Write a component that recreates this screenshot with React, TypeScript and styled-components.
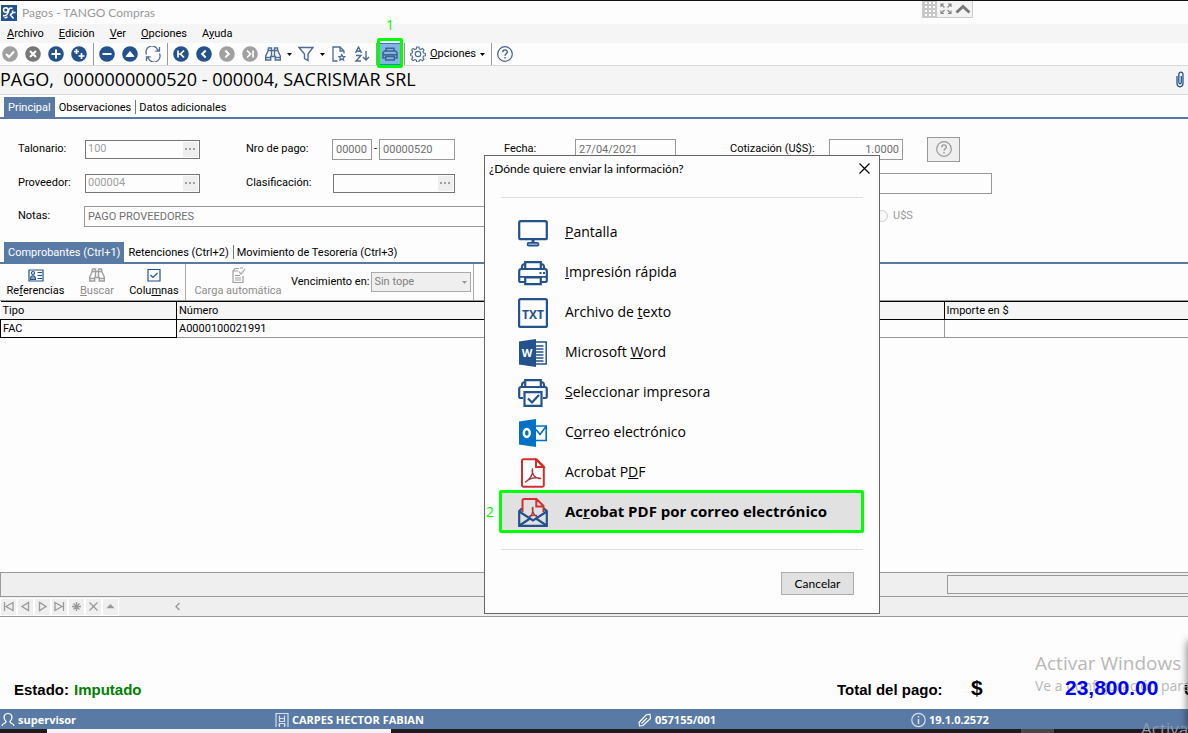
import React from "react";
import styled, { createGlobalStyle, css } from "styled-components";

const NAVY = "#24528c";
const STEEL = "#5a7aa6";
const MARK = "#00ff00";
const UI = `Roboto, "Liberation Sans", sans-serif`;
const HUMANIST = `"Open Sans", "Noto Sans", sans-serif`;
const COMPACT = `Lato, "Open Sans", sans-serif`;
const CLASSIC = `"Liberation Sans", Arial, sans-serif`;

const Global = createGlobalStyle`
  * { box-sizing: border-box; }
  body { margin: 0; background: #fdfdfd; color: #000; font: 11px/16px ${UI}; }
  button, input, select { font: inherit; color: inherit; margin: 0; border-radius: 0; }
  button { background: none; border: 0; padding: 0; }
`;

const Page = styled.div`
  position: relative;
  display: flex;
  flex-direction: column;
  min-height: 100vh;
  overflow: hidden;
  background: #fdfdfd;
  border-top: 1px solid #111;
`;
const TitleBar = styled.header`
  display: flex;
  align-items: center;
  gap: 5px;
  height: 23px;
  padding-left: 1px;
  color: #999;
  font: 12px/16px ${COMPACT};
`;
const MenuBar = styled.nav`
  display: flex;
  align-items: center;
  gap: 15px;
  height: 19px;
  padding-left: 7px;
  background: #f5f5f5;
`;
const Toolbar = styled.div`
  display: flex;
  align-items: center;
  gap: 7px;
  height: 23px;
  padding-left: 2px;
  border-bottom: 1px solid #d9d9d9;
`;
const Divider = styled.span`
  width: 1px;
  align-self: stretch;
  margin: 0 -2px 0 -1px;
  background: #999;
`;
const ToolButton = styled.button<{ $active?: boolean }>`
  position: relative;
  display: flex;
  align-items: center;
  gap: 4px;
  height: 22px;
  ${(p) =>
    p.$active &&
    css`
      margin: 0 -3px;
      padding: 0 3px;
      background: #84b4e4;
      box-shadow: inset 0 1px #2a7fd4, inset 0 -1px #2a7fd4;
    `}
`;
const CaretButton = styled(ToolButton)`
  margin: 0 -1px;
`;
const Callout = styled.span`
  position: absolute;
  inset: -5px -2px -3px -2px;
  border: 3px solid ${MARK};
  border-radius: 2px;
`;
const CalloutNumber = styled.span`
  position: absolute;
  left: 0;
  right: 0;
  bottom: 33px;
  text-align: center;
  color: ${MARK};
  font: 14px/14px ${HUMANIST};
`;
const Heading = styled.h1`
  display: flex;
  align-items: center;
  justify-content: space-between;
  height: 29px;
  margin: 0;
  padding: 0 3px 2px 0;
  background: #f5f5f5;
  border-bottom: 1px solid #d9d9d9;
  font: 18px/24px ${HUMANIST};
  white-space: pre;
`;
const Tabs = styled.div<{ $top: number }>`
  display: flex;
  align-items: flex-end;
  height: ${(p) => p.$top + 22}px;
  padding: 0 4px;
  border-bottom: 2px solid ${STEEL};
`;
const Tab = styled.button<{ $on?: boolean }>`
  height: 20px;
  padding: 1px 4px 0;
  position: relative;
  ${(p) => (p.$on ? `background:${STEEL};color:#fff;` : "")}
  & + &:not(:nth-child(2))::before {
    content: "";
    position: absolute;
    left: 0;
    top: 3px;
    bottom: 3px;
    width: 1px;
    background: #777;
  }
`;
const Form = styled.form`
  display: grid;
  grid-template-columns: 66px 162px 86px 172px 71px 155px 99px 98px 1fr;
  grid-template-rows: 34px 34px 32px;
  align-items: center;
  height: 123px;
  padding: 13px 0 10px 18px;
`;
const Cell = styled.div<{ $from?: number; $to?: number; $indent?: number }>`
  display: flex;
  align-items: center;
  gap: 2px;
  padding-left: ${(p) => p.$indent ?? 0}px;
  ${(p) => (p.$from ? `grid-column: ${p.$from} / ${p.$to};` : "")}
`;
const TextBox = styled.input<{ $w: number; $right?: boolean }>`
  width: ${(p) => p.$w}px;
  height: 21px;
  padding: 0 3px;
  background: #fdfdfd;
  border: 1px solid #999;
  color: #707070;
  text-align: ${(p) => (p.$right ? "right" : "left")};
`;
const Lookup = styled.div<{ $w: number }>`
  display: flex;
  align-items: center;
  width: ${(p) => p.$w}px;
  height: 19px;
  border: 1px solid #777;
  padding-right: 1px;
  input {
    flex: 1;
    min-width: 0;
    height: 16px;
    padding: 0 2px;
    border: 0;
    background: none;
    color: #a0a0a0;
  }
  button {
    display: flex;
    align-items: center;
    justify-content: center;
    width: 15px;
    height: 15px;
    background: #eee;
  }
`;
const HelpButton = styled.button`
  display: flex;
  align-items: center;
  justify-content: center;
  width: 33px;
  height: 25px;
  background: #efefef;
  border: 1px solid #999;
`;
const RadioLabel = styled.label`
  display: flex;
  align-items: center;
  gap: 5px;
  color: #999;
  input { width: 12px; height: 12px; margin: 0; }
`;
const GridBar = styled.div`
  display: flex;
  height: 37px;
  border-bottom: 1px solid #999;
`;
const GridTool = styled.button<{ $w: number; $off?: boolean }>`
  display: flex;
  flex-direction: column;
  align-items: center;
  width: ${(p) => p.$w}px;
  padding-top: 3px;
  white-space: nowrap;
  color: ${(p) => (p.$off ? "#8c8c8c" : "#000")};
`;
const BarRule = styled.span`
  width: 1px;
  background: #aaa;
`;
const DueLabel = styled.label`
  display: flex;
  align-items: center;
  gap: 2px;
  padding: 0 2px 0 1px;
`;
const Select = styled.select`
  appearance: none;
  width: 100px;
  height: 20px;
  padding: 0 2px;
  border: 1px solid #aaa;
  background: #efefef;
  color: #808080;
  opacity: 1;
`;
const SelectWrap = styled.span`
  position: relative;
  display: flex;
  svg { position: absolute; right: 4px; top: 9px; }
`;
const GridArea = styled.div`
  flex: 1;
`;
const Table = styled.table`
  width: 100%;
  table-layout: fixed;
  border-collapse: collapse;
  th, td { height: 18px; padding: 0 2px; text-align: left; font-weight: 400; line-height: 16px; }
  th { background: #f5f5f5; border: 1px solid #000; border-left-width: 0; border-right-width: 0; }
  th + th { border-left-width: 1px; }
  td { border-bottom: 1px solid #999; }
  td:first-child { border: 1px solid #000; }
  td + td { border-left: 1px solid #999; }
  col:first-child { width: 176px; }
  col:last-child { width: 244px; }
`;
const Totals = styled.div`
  display: flex;
  justify-content: flex-end;
  align-items: center;
  height: 25px;
  background: #efefef;
  border: 1px solid #999;
  border-right: 0;
`;
const TotalBox = styled.span`
  width: 241px;
  height: 19px;
  border: 1px solid #999;
  border-right: 0;
`;
const Navigator = styled.div`
  display: flex;
  align-items: center;
  height: 20px;
  background: #efefef;
  border-bottom: 1px solid #999;
`;
const NavButton = styled.button`
  display: flex;
  align-items: center;
  justify-content: center;
  width: 17px;
  height: 18px;
  border: 1px solid #fff;
`;
const NavArrow = styled(NavButton)`
  margin-left: 50px;
  border: 0;
`;
const Summary = styled.div`
  display: flex;
  align-items: flex-end;
  height: 92px;
  padding: 0 0 10px 14px;
  overflow: hidden;
  white-space: nowrap;
  font: bold 15px/18px ${CLASSIC};
`;
const State = styled.span`
  flex: 1;
  display: flex;
  gap: 5px;
  em { font-style: normal; color: #008000; }
`;
const TotalLabel = styled.span`
  width: 134px;
`;
const Currency = styled.span`
  width: 94px;
  font-size: 21px;
  line-height: 22px;
`;
const Amount = styled.span`
  position: relative;
  z-index: 1;
  width: 119px;
  color: #0000ff;
  font-size: 21px;
  line-height: 22px;
`;
const SecondTotal = styled.span`
  width: 4px;
  overflow: hidden;
`;
const StatusBar = styled.footer`
  display: grid;
  grid-template-columns: 274fr 362fr 274fr 278fr;
  align-items: center;
  height: 20px;
  padding-top: 2px;
  background: ${STEEL};
  color: #fff;
  font: bold 11px/16px ${HUMANIST};
  span { display: flex; align-items: center; gap: 3px; padding-left: 1px; }
`;
const Taskbar = styled.div`
  display: flex;
  height: 4px;
  padding-left: 47px;
  background: #1c1c1c;
`;
const TaskSearch = styled.span`
  width: 344px;
  background: #f5f5f5;
`;
const TaskItem = styled.span`
  width: 33px;
  margin: 0 134px 0 auto;
  background: #484848;
`;
const Watermark = styled.div`
  position: absolute;
  left: 1035px;
  bottom: 37px;
  color: #b8b8b8;
  white-space: nowrap;
  font: 14px/20px ${HUMANIST};
  strong { display: block; font-weight: 400; font-size: 19px; line-height: 25px; }
`;
const LowerMark = styled.div`
  position: absolute;
  right: 0;
  bottom: -7px;
  width: 47px;
  overflow: hidden;
  color: #8f9aab;
  white-space: nowrap;
  font: 17px/22px ${HUMANIST};
`;
const EdgeShadow = styled.div`
  position: absolute;
  right: -8px;
  bottom: 4px;
  width: 8px;
  height: 88px;
  box-shadow: 0 0 8px rgba(0, 0, 0, 0.6);
`;
const Overlay = styled.div`
  position: absolute;
  top: 0;
  right: 215px;
  display: flex;
  align-items: center;
  height: 17px;
  padding-right: 1px;
  background: #f3f3f3;
  border: 1px solid #ccc;
  border-top: 0;
`;
const Dialog = styled.section`
  position: absolute;
  left: 484px;
  top: 154px;
  width: 396px;
  padding: 0 16px 18px;
  background: #fdfdfd;
  border: 1px solid #666;
`;
const DialogTitle = styled.div`
  display: flex;
  align-items: center;
  justify-content: space-between;
  height: 25px;
  margin: 0 -7px 16px -12px;
  h2 { margin: 0; font: 12px/16px ${COMPACT}; }
  button { display: flex; }
`;
const OptionList = styled.div`
  padding: 15px 0 16px;
  border-top: 1px solid #ddd;
  border-bottom: 1px solid #ddd;
`;
const OptionText = styled.span`
  padding-bottom: 2px;
`;
const Option = styled.button<{ $marked?: boolean }>`
  position: relative;
  display: flex;
  align-items: center;
  gap: 17px;
  width: 100%;
  height: 40px;
  padding-left: 17px;
  text-align: left;
  font: 14px/20px ${HUMANIST};
  ${(p) =>
    p.$marked &&
    css`
      width: calc(100% + 3px);
      height: 43px;
      margin: -3px -1px 0 -2px;
      padding-left: 16px;
      border: 3px solid ${MARK};
      border-radius: 2px;
      background: #e1e1e1;
      font-weight: 700;
      font-size: 15px;
    `}
`;
const OptionNumber = styled.span`
  position: absolute;
  left: -16px;
  color: ${MARK};
  font: 14px/14px ${HUMANIST};
`;
const Actions = styled.div`
  display: flex;
  justify-content: flex-end;
  padding: 22px 9px 0 0;
  button {
    width: 73px;
    height: 23px;
    background: #e1e1e1;
    border: 1px solid #adadad;
    font: 12px/16px ${COMPACT};
  }
`;

type SvgProps = { w?: number; h?: number; box?: string; color?: string; sw?: number; children: React.ReactNode };
const Svg = ({ w = 16, h = 16, box, color = NAVY, sw = 1.2, children }: SvgProps) => (
  <svg width={w} height={h} viewBox={box ?? `0 0 ${w} ${h}`} fill="none" stroke={color} strokeWidth={sw} aria-hidden>
    {children}
  </svg>
);
const Disc = ({ d, color = NAVY, sw = 2, fill = "none" }: { d: string; color?: string; sw?: number; fill?: string }) => (
  <Svg>
    <circle cx="8" cy="8" r="7.8" fill={color} stroke="none" />
    <path d={d} stroke="#fff" strokeWidth={sw} fill={fill} />
  </Svg>
);
const Caret = ({ color = "#000" }: { color?: string }) => (
  <svg width="5" height="3" viewBox="0 0 5 3" aria-hidden><path d="M0 0h5L2.500 3z" fill={color} /></svg>
);
const Binoculars = ({ color = "#4d6c99" }: { color?: string }) => (
  <Svg color={color} sw={1.400}>
    <path d="M3.500 2h3v2.500h3V2h3l.5 3 2.300 5v4h-5v-3.500H5.700V14h-5v-4L3 5zM3 4.500h3.500M9.500 4.500H13M6.500 4.500v6M9.500 4.500v6M.8 11.500h5M10.300 11.500h5" />
  </Svg>
);
const HelpIcon = ({ color = "#3d6090" }: { color?: string }) => (
  <Svg color={color}>
    <circle cx="8" cy="8" r="7.300" />
    <path d="M5.800 6.200c0-3 4.500-3 4.500-.2C10.300 7.700 8 7.700 8 9.700M8 11v1.500" strokeWidth="1.400" />
  </Svg>
);
const Dots = ({ color = "#a0a0a0" }: { color?: string }) => (
  <svg width="11" height="2" aria-hidden><path d="M0 0h2v2H0zM4 0h2v2H4zM8 0h2v2H8z" fill={color} /></svg>
);

const PrinterSmall = () => (
  <Svg color="#3c628f" sw={1.500}>
    <path d="M4 5V2.200h8V5M3.500 12H1V6.500L2.500 5h11L15 6.500V12h-2.500M1 8.700h14M3.700 10.500h8.600v3.500H3.700z" />
  </Svg>
);

const Big = ({ children, sw = 2.200, color = NAVY }: { children: React.ReactNode; sw?: number; color?: string }) => (
  <Svg w={30} h={30} sw={sw} color={color}>{children}</Svg>
);
const icons = {
  screen: (
    <Big>
      <rect x="1.200" y="3.200" width="27.600" height="18" rx="1.500" />
      <path d="M15 21v4" strokeWidth="3" />
      <rect x="9.500" y="24.800" width="11" height="3" rx="1.200" fill="#8fa6c4" strokeWidth="1.600" />
    </Big>
  ),
  printer: (
    <Big>
      <path d="M7.200 11V4.200h15.600V11" />
      <path d="M7 6C4 6 4 8 3.800 11M23 6c3 0 3 2 3.200 5" />
      <path d="M6.500 24H2.500a1.300 1.300 0 0 1-1.300-1.300V13a2 2 0 0 1 2-2h23.600a2 2 0 0 1 2 2v9.700a1.300 1.300 0 0 1-1.300 1.300h-4" />
      <path d="M1 18.800h28M21.500 15h2M25 15h2" strokeWidth="1.800" />
      <path d="M7.200 19.500h15.600v6.700H7.200z" fill="#fdfdfd" />
    </Big>
  ),
  txt: (
    <Big>
      <rect x="1.100" y="1.100" width="27.800" height="27.800" rx="1.500" />
      <text x="15" y="20.500" textAnchor="middle" fontFamily="Open Sans" fontWeight="700" fontSize="12" fill={NAVY} stroke="none">TXT</text>
    </Big>
  ),
  word: (
    <Big sw={1.500}>
      <path d="M17 4h11.200v22H17M18 8h7.500M18 11h7.500M18 14h7.500M18 17h7.500M18 20h7.500M18 23h7.500" />
      <path d="M1 3.500 18 1v28L1 26.500z" fill={NAVY} stroke="none" />
      <text x="9" y="19" textAnchor="middle" fontFamily="Open Sans" fontWeight="700" fontSize="11" fill="#fff" stroke="none">W</text>
    </Big>
  ),
  select: (
    <Big>
      <path d="M7.200 10V2.200h15.600V10M7 4C4 4 4 6 3.800 9M23 4c3 0 3 2 3.200 5" />
      <path d="M5 20H2.500a1.300 1.300 0 0 1-1.300-1.300V11a2 2 0 0 1 2-2h23.600a2 2 0 0 1 2 2v7.700a1.300 1.300 0 0 1-1.300 1.300H25" />
      <path d="M6.500 14.200h17v13.600h-17z" fill="#fdfdfd" />
      <path d="m10 20.500 4 4 7-7.500" />
    </Big>
  ),
  outlook: (
    <Big sw={1.600} color="#0072c6">
      <path d="M18 8h10.200v14.500H18M18 11.500l4 5 6-8" />
      <path d="M1 3.500 18 1v28L1 26.500z" fill="#0072c6" stroke="none" />
      <ellipse cx="8.800" cy="15" rx="3" ry="4" stroke="#fff" strokeWidth="2.400" />
    </Big>
  ),
  pdf: (
    <Big color="#d2302f" sw={2}>
      <path d="M5.500 1.200h13l7.300 7.300v18.800a1.500 1.500 0 0 1-1.500 1.500H5.500A1.500 1.500 0 0 1 4 27.300V2.700a1.500 1.500 0 0 1 1.500-1.500zM18 1.500V9h7.500z" />
      <path d="M7.500 24c4.500-2.500 8-8 7-13-1.300 4 2 10 8 9.500-5-2-11.500 0-15 3.500z" strokeWidth="1.400" stroke="#a03a3e" strokeLinejoin="round" />
    </Big>
  ),
  mail: (
    <Big>
      <path d="M4.500 15V3.200A1.500 1.500 0 0 1 6 2h12.500l7 7v6M18.300 2.500V9.500h7" stroke="#d2302f" strokeWidth="2" />
      <path d="M10 22c4-3 5.500-7 4.700-12-1 4 1 8 5.500 11M11 19.500c2-1.500 5-1.500 8-1" stroke="#a03a3e" strokeWidth="1.400" />
      <path d="M1.200 14v14.800h27.600V14L15 23.500z" fill="#e1e1e1" stroke="none" />
      <path d="M4 11.500 1.200 14v14.800h27.600V14L26 11.500" />
      <path d="m1.200 14.500 13.800 9 13.800-9M1.500 28.500 12 21.500M28.500 28.500 18 21.500" />
    </Big>
  ),
};

const options: { icon: React.ReactNode; label: React.ReactNode; marked?: boolean }[] = [
  { icon: icons.screen, label: <><u>P</u>antalla</> },
  { icon: icons.printer, label: <><u>I</u>mpresión rápida</> },
  { icon: icons.txt, label: <>Archivo de <u>t</u>exto</> },
  { icon: icons.word, label: <>Microsoft <u>W</u>ord</> },
  { icon: icons.select, label: <><u>S</u>eleccionar impresora</> },
  { icon: icons.outlook, label: <>C<u>o</u>rreo electrónico</> },
  { icon: icons.pdf, label: <>Acrobat P<u>D</u>F</> },
  { icon: icons.mail, label: <>Ac<u>r</u>obat PDF por correo electrónico</>, marked: true },
];

const navIcons: [string, React.ReactNode][] = [
  ["Primero", <path key="a" d="M1.500 1v9M10 1.500v8L3 5.500z" />],
  ["Anterior", <path key="a" d="M8.500 1.500v8l-6.500-4z" />],
  ["Siguiente", <path key="a" d="M2.500 1.500v8l6.500-4z" />],
  ["Último", <path key="a" d="M9.500 1v9M1 1.500v8l7-4z" />],
  ["Nuevo", <path key="a" d="M5.500 1v9M1 5.500h9M2.500 2.500l6 6M8.500 2.500l-6 6" />],
  ["Cancelar edición", <path key="a" d="m1.500 1.500 8 8M9.500 1.500l-8 8" />],
  ["Subir", <path key="a" d="M3 6.500 5.500 4 8 6.500z" fill="#999" />],
];

export default function App() {
  return (
    <>
      <Global />
      <Page>
        <TitleBar>
          <Svg color="#fff" sw={1.500}>
            <rect width="16" height="16" fill={NAVY} stroke="none" />
            <circle cx="4.800" cy="5" r="2.300" />
            <path d="M2 10.500c3.500 1 5-2 5.500-4.500C8 3.500 9 2.500 11.500 3.500M9 9.500c2 0 3-2 2.500-4M9 9.500l3.500 4M11.500 7.500h3M3.500 13l3-1" />
          </Svg>
          <span>Pagos - TANGO Compras</span>
        </TitleBar>
        <MenuBar>
          <button><u>A</u>rchivo</button>
          <button><u>E</u>dición</button>
          <button><u>V</u>er</button>
          <button><u>O</u>pciones</button>
          <button>A<u>y</u>uda</button>
        </MenuBar>
        <Toolbar>
          <ToolButton aria-label="Aceptar"><Disc color="#a0a0a0" d="m4 8 3 3 5-5.500" /></ToolButton>
          <ToolButton aria-label="Cancelar"><Disc color="#777" d="m5 5 6 6M11 5l-6 6" /></ToolButton>
          <ToolButton aria-label="Agregar"><Disc d="M8 3.500v9M3.500 8h9" /></ToolButton>
          <ToolButton aria-label="Copiar"><Disc sw={1.700} d="M5.500 3v5M3 5.500h5M10.500 7v6M7.500 10h6" /></ToolButton>
          <Divider />
          <ToolButton aria-label="Eliminar"><Disc d="M3.500 8h9" /></ToolButton>
          <ToolButton aria-label="Modificar"><Disc sw={1} fill="#fff" d="M4 10.500 8 5.500l4 5z" /></ToolButton>
          <ToolButton aria-label="Actualizar">
            <Svg color="#4d6c99" sw={1.300}>
              <path d="M1.500 8.500A6 6 0 0 1 12.500 3.500L14.500 5.200M14.500 1v4.200h-4.200M14.500 7.500A6 6 0 0 1 3.500 12.500L1.500 10.800M1.500 15v-4.200h4.200" />
            </Svg>
          </ToolButton>
          <Divider />
          <ToolButton aria-label="Primero"><Disc sw={1.700} d="M5 4.500v7M11 4.500 7.500 8l3.500 3.500M7.500 8H5" /></ToolButton>
          <ToolButton aria-label="Anterior"><Disc d="M9.700 4.500 6.200 8l3.500 3.500" /></ToolButton>
          <ToolButton aria-label="Siguiente"><Disc color="#a0a0a0" d="M6.300 4.500 9.800 8l-3.500 3.500" /></ToolButton>
          <ToolButton aria-label="Último"><Disc color="#a0a0a0" sw={1.700} d="M11 4.500v7M5 4.500 8.500 8 5 11.500" /></ToolButton>
          <ToolButton aria-label="Buscar"><Binoculars /></ToolButton>
          <CaretButton aria-label="Más búsquedas"><Caret /></CaretButton>
          <ToolButton aria-label="Filtrar">
            <Svg color="#4d6c99" sw={1.400}><path d="M1 1.500h14L10 8v6.500l-3.500-2V8z" /></Svg>
          </ToolButton>
          <CaretButton aria-label="Más filtros"><Caret /></CaretButton>
          <ToolButton aria-label="Página">
            <Svg color="#4d6c99" sw={1.300}>
              <path d="M6.500 15H2V1h7l4 4v2.500M9 1v4h4M10.800 8.700l.9 1.700 2 .3-1.500 1.400.4 2-1.800-1-1.800 1 .4-2L8 10.700l2-.3z" />
            </Svg>
          </ToolButton>
          <ToolButton aria-label="Ordenar">
            <Svg color="#4d6c99" sw={1.400}>
              <path d="M1.500 7 4.500 1l3 6M2.500 5.200h4M2 9.500h5l-5 5.500h5M12 5v9M9 11l3 3 3-3" />
            </Svg>
          </ToolButton>
          <Divider />
          <ToolButton $active aria-label="Imprimir">
            <PrinterSmall />
            <Callout />
            <CalloutNumber>1</CalloutNumber>
          </ToolButton>
          <Divider />
          <ToolButton>
            <Svg color="#4d6c99" sw={1.200}>
              <path d="M6.800 1h2.400l.4 2 1.600.7 1.800-1.200 1.600 1.600-1.200 1.800.7 1.500 2 .4v2.400l-2 .4-.7 1.500 1.200 1.800-1.600 1.600-1.800-1.200-1.600.7-.4 2H6.800l-.4-2-1.600-.7L3 15.500l-1.600-1.600 1.200-1.800-.7-1.500-1.500-.4V7.800l1.500-.4.7-1.500-1.200-1.800L3 2.500l1.800 1.200L6.400 3z" transform="translate(.3 .1) scale(.94)" />
              <circle cx="8" cy="8" r="2.700" />
            </Svg>
            <span><u>O</u>pciones</span>
            <Caret />
          </ToolButton>
          <Divider />
          <ToolButton aria-label="Ayuda"><HelpIcon /></ToolButton>
        </Toolbar>
        <Heading>
          <span>PAGO,  0000000000520 - 000004, SACRISMAR SRL</span>
          <Svg w={9} h={17} sw={1.300}>
            <path d="M1 5v7c0 5 6 5 6 0V3.500C7 .2 2.800.2 2.800 3.500V11c0 2.300 2.500 2.300 2.500 0V5" />
          </Svg>
        </Heading>
        <Tabs $top={2}>
          <Tab $on>Principal</Tab>
          <Tab>Observaciones</Tab>
          <Tab>Datos adicionales</Tab>
        </Tabs>
        <Form onSubmit={(e) => e.preventDefault()}>
          <label htmlFor="talonario">Talonario:</label>
          <Cell $indent={1}>
            <Lookup $w={115}><input id="talonario" defaultValue="100" disabled /><button type="button" aria-label="Buscar talonario"><Dots /></button></Lookup>
          </Cell>
          <label htmlFor="pago">Nro de pago:</label>
          <Cell>
            <TextBox id="pago" $w={40} defaultValue="00000" disabled />-
            <TextBox aria-label="Número" $w={76} defaultValue="00000520" disabled />
          </Cell>
          <label htmlFor="fecha">Fecha:</label>
          <Cell><TextBox id="fecha" $w={101} defaultValue="27/04/2021" disabled /></Cell>
          <label htmlFor="cotizacion">Cotización (U$S):</label>
          <Cell><TextBox id="cotizacion" $w={74} $right defaultValue="1.0000" disabled /></Cell>
          <HelpButton type="button" aria-label="Ayuda"><HelpIcon color="#999" /></HelpButton>

          <label htmlFor="proveedor">Proveedor:</label>
          <Cell $indent={1}>
            <Lookup $w={115}><input id="proveedor" defaultValue="000004" disabled /><button type="button" aria-label="Buscar proveedor"><Dots /></button></Lookup>
          </Cell>
          <label htmlFor="clasificacion">Clasificación:</label>
          <Cell $indent={1}>
            <Lookup $w={122}><input id="clasificacion" /><button type="button" aria-label="Buscar clasificación"><Dots /></button></Lookup>
          </Cell>
          <Cell $from={6} $to={10}><TextBox aria-label="Detalle" $w={417} disabled /></Cell>

          <label htmlFor="notas">Notas:</label>
          <Cell $from={2} $to={8}><TextBox id="notas" $w={680} defaultValue="PAGO PROVEEDORES" disabled /></Cell>
          <Cell $from={8} $to={10} $indent={47}>
            <RadioLabel><input type="radio" name="moneda" disabled />U$S</RadioLabel>
          </Cell>
        </Form>
        <Tabs $top={0}>
          <Tab $on>Comprobantes (Ctrl+1)</Tab>
          <Tab>Retenciones (Ctrl+2)</Tab>
          <Tab>Movimiento de Tesorería (Ctrl+3)</Tab>
        </Tabs>
        <GridBar>
          <GridTool $w={71}>
            <Svg><path d="M1 3h14v11H1zM9.500 5.500H14M9.500 8.500H14M9.500 11.500H14" /><circle cx="5" cy="6" r="1.500" /><path d="M2.500 12.500c0-5 5-5 5 0z" fill="#8fa6c4" /></Svg>
            <span>Re<u>f</u>erencias</span>
          </GridTool>
          <GridTool $w={52} $off><Binoculars color="#a0a0a0" /><span><u>B</u>uscar</span></GridTool>
          <GridTool $w={62}>
            <Svg><path d="M2 2.500h12v11.500H2zM4.500 8 7 10.500 11.500 6" /></Svg>
            <span>Colu<u>m</u>nas</span>
          </GridTool>
          <BarRule />
          <GridTool $w={104} $off>
            <Svg color="#a0a0a0"><path d="M8 4H3v11.500h10V9M5 8.500h5M5 11h6M5 13h6M3 4l2-2.500h4M9 4.500 11 7l4-5M10 1h3" /></Svg>
            <span>Carga automática</span>
          </GridTool>
          <DueLabel>
            <span>Vencimiento en:</span>
            <SelectWrap>
              <Select disabled><option>Sin tope</option></Select>
              <Caret color="#999" />
            </SelectWrap>
          </DueLabel>
          <BarRule />
        </GridBar>
        <GridArea>
          <Table>
            <colgroup><col /><col /><col /></colgroup>
            <thead><tr><th>Tipo</th><th>Número</th><th>Importe en $</th></tr></thead>
            <tbody><tr><td>FAC</td><td>A0000100021991</td><td /></tr></tbody>
          </Table>
        </GridArea>
        <Totals><TotalBox /></Totals>
        <Navigator>
          {navIcons.map(([name, glyph]) => (
            <NavButton key={name} aria-label={name}><Svg w={11} h={11} color="#999" sw={1.300}>{glyph}</Svg></NavButton>
          ))}
          <NavArrow aria-label="Desplazar"><Svg w={11} h={11} color="#999" sw={1.400}><path d="M7.500 2 4 5.500 7.500 9" /></Svg></NavArrow>
        </Navigator>
        <Summary>
          <State>Estado: <em>Imputado</em></State>
          <TotalLabel>Total del pago:</TotalLabel>
          <Currency>$</Currency>
          <Amount>23,800.00</Amount>
          <SecondTotal>U</SecondTotal>
        </Summary>
        <StatusBar>
          <span>
            <Svg w={14} color="#fff" sw={1.200}><path d="M1 14c0-3 4-2 4-4.500C1.500 5.500 3 1.500 7 1.500s5.500 4 2 8C9 12 13 11 13 14" /></Svg>
            supervisor
          </span>
          <span>
            <Svg w={14} color="#d5deeb" sw={1.200}><path d="M1 15V1.500h12V15M4.500 15v-3.500h5V15M4.500 3.500v6h5v-6M4.500 6.500h5M3 13h1.500M9.500 13H11" /></Svg>
            CARPES HECTOR FABIAN
          </span>
          <span>
            <Svg w={15} color="#fff" sw={1.100}><path d="M2 10.500 9 3l4-.8.500 4.300-7.500 7-3.500.5zM4.500 11.500l5.500-5.500" /></Svg>
            057155/001
          </span>
          <span>
            <Svg w={15} color="#d5deeb" sw={1.200}><circle cx="7.500" cy="8" r="6.700" /><path d="M7.500 4v1.500M7.500 7v5" strokeWidth="1.600" /></Svg>
            19.1.0.2572
          </span>
        </StatusBar>
        <Taskbar><TaskSearch /><TaskItem /></Taskbar>

        <Watermark><strong>Activar Windows</strong>Ve a Configuración para</Watermark>
        <LowerMark>Activar</LowerMark>
        <EdgeShadow />

        <Overlay>
          <Svg w={14} h={16} color="#fff" sw={2}>
            <rect width="14" height="16" fill="#c8c8c8" stroke="none" />
            <path d="M3 1v14M7 1v14M11 1v14" strokeDasharray="2 2" />
          </Svg>
          <Svg w={18} h={16} color="#888" sw={1.200}>
            <path d="M4 6V3h3M4 3l3.500 3.500M14 6V3h-3M14 3l-3.500 3.500M4 9.500v3h3M4 12.500 7.500 9M14 9.500v3h-3M14 12.500 10.500 9" />
          </Svg>
          <Svg color="#777" sw={2.800}><path d="M1.500 11.500 8 5.500l6.500 6" /></Svg>
        </Overlay>

        <Dialog role="dialog" aria-labelledby="dialog-title">
          <DialogTitle>
            <h2 id="dialog-title">¿Dónde quiere enviar la información?</h2>
            <button aria-label="Cerrar"><Svg w={11} h={11} color="#000"><path d="m.5.5 10 10M10.500.5l-10 10" /></Svg></button>
          </DialogTitle>
          <OptionList>
            {options.map((o, i) => (
              <Option key={i} $marked={o.marked}>
                {o.marked && <OptionNumber>2</OptionNumber>}
                {o.icon}
                <OptionText>{o.label}</OptionText>
              </Option>
            ))}
          </OptionList>
          <Actions><button>Cancelar</button></Actions>
        </Dialog>
      </Page>
    </>
  );
}
